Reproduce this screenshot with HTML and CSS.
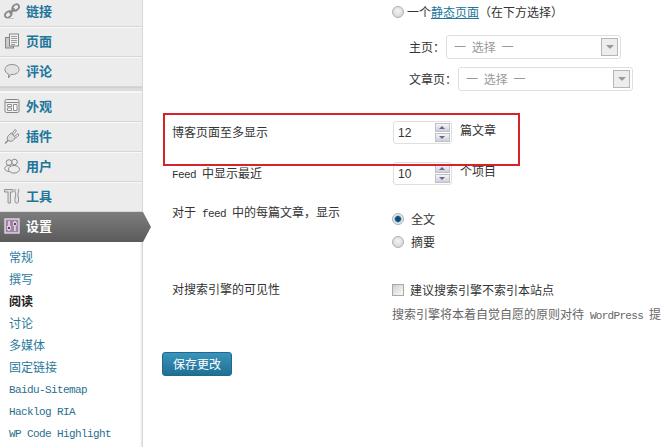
FILE: index.html
```html
<!DOCTYPE html>
<html lang="zh-CN">
<head>
<meta charset="utf-8">
<title>阅读设置</title>
<link rel="stylesheet" href="styles.css">
</head>
<body>
<div class="app">
  <aside class="sidebar">
    <nav class="menu">
      <a class="item first"><svg class="ico" viewBox="0 0 16 16"><g fill="none" stroke="#8a8a8a" stroke-width="1.800"><ellipse cx="4.300" cy="11.500" rx="3.600" ry="2.700" transform="rotate(-42 4.300 11.500)"/><ellipse cx="11.700" cy="4.500" rx="3.600" ry="2.700" transform="rotate(-42 11.700 4.500)"/><path d="M5.500 10.500l5-5" stroke-width="2.600"/></g><path d="M2 15.500h8" stroke="#c8c8c8"/></svg><span>链接</span></a>
      <a class="item"><svg class="ico" viewBox="0 0 16 16"><rect x="1.500" y="4.500" width="8" height="10.500" fill="#c9c9c9" stroke="#858585"/><rect x="5.500" y="1" width="9" height="12" fill="#f2f2f2" stroke="#858585"/><path d="M7 3.500h6M7 5.500h6M7 7.500h6M7 9.500h6M7 11.500h4" stroke="#9c9c9c"/></svg><span>页面</span></a>
      <a class="item"><svg class="ico" viewBox="0 0 16 16"><path d="M8 1.500c4 0 7 2 7 5s-3 5-7 5H6.800L4.500 15l.2-3.900C2.300 10.300 1 8.600 1 6.500c0-3 3-5 7-5z" fill="#e2e2e2" stroke="#8f8f8f"/></svg><span>评论</span></a>
      <div class="sep"></div>
      <a class="item"><svg class="ico" viewBox="0 0 16 16"><rect x="1" y="1.500" width="14" height="13" rx="1.500" fill="#f0f0f0" stroke="#858585"/><path d="M1.500 4.500h13" stroke="#858585"/><path d="M3.500 6.500h4v2h-4zM3.500 10h4v2.500h-4zM9.500 6.500h3.500v6H9.500z" fill="#fff" stroke="#858585" stroke-width=".9"/></svg><span>外观</span></a>
      <a class="item"><svg class="ico" viewBox="0 0 16 16"><path d="M1 15.500l3.500-3.500" stroke="#8d8d8d" stroke-width="1.400" fill="none"/><path d="M4 12.500C2.500 10.500 3.500 8 5.500 6.500l2-1.500 4 4.500-1.500 2c-1.500 2-4 2.500-6 .5z" fill="#dedede" stroke="#858585"/><path d="M8 5.500L11 1.500l1.500 1.200L9.500 6.500zM10.500 8.500l3.500-3 1 1.500-3.200 3z" fill="#f0f0f0" stroke="#858585" stroke-width=".9"/></svg><span>插件</span></a>
      <a class="item"><svg class="ico" viewBox="0 0 16 16"><g fill="#ededed" stroke="#8a8a8a"><circle cx="5" cy="4.500" r="2.800"/><circle cx="10.500" cy="4" r="2.800"/><path d="M.8 10.500c0-2 2-3 4.200-3 1 0 2 .3 2.500 1L6 13.500c-3 0-5.200-1-5.200-3z"/><ellipse cx="10" cy="11.300" rx="5.500" ry="3.800"/></g></svg><span>用户</span></a>
      <a class="item"><svg class="ico" viewBox="0 0 16 16"><path d="M.5 1.500h8.500v2.500H6.500v11h-2.500V4H.5z" fill="#dcdcdc" stroke="#8d8d8d" stroke-width=".9"/><path d="M11 1v3l.6 1v4H11v5c0 1.500 3.500 1.500 3.500 0V9H14V5l.6-1V1" fill="#e6e6e6" stroke="#8d8d8d" stroke-width=".9"/></svg><span>工具</span></a>
      <a class="item current"><svg class="ico" viewBox="0 0 16 16"><rect x="1" y="1" width="14" height="14" fill="#a283a8" stroke="#e9dfea" stroke-width="1.300"/><path d="M5 3v10M11 3v10" stroke="#f4eef5" stroke-width="1.300"/><rect x="3.500" y="8.500" width="3" height="3" fill="#5f4a66" stroke="#f4eef5" stroke-width=".7"/><rect x="9.500" y="4.500" width="3" height="3" fill="#5f4a66" stroke="#f4eef5" stroke-width=".7"/></svg><span>设置</span></a>
    </nav>
    <ul class="submenu">
      <li><a>常规</a></li>
      <li><a>撰写</a></li>
      <li class="active"><a>阅读</a></li>
      <li><a>讨论</a></li>
      <li><a>多媒体</a></li>
      <li><a>固定链接</a></li>
      <li class="latin"><a>Baidu-Sitemap</a></li>
      <li class="latin"><a>Hacklog RIA</a></li>
      <li class="latin"><a>WP Code Highlight</a></li>
    </ul>
  </aside>

  <main class="content">
    <section class="row row-front">
      <div></div>
      <div class="field">
        <label class="choice tight"><span class="radio"></span>一个<a class="link">静态页面</a>（在下方选择）</label>
        <div class="pick pick-home"><span class="pick-label">主页：</span><span class="select"><span>一 选择 一</span><i class="arrow"></i></span></div>
        <div class="pick pick-posts"><span class="pick-label">文章页：</span><span class="select"><span>一 选择 一</span><i class="arrow"></i></span></div>
      </div>
    </section>
    <section class="row row-num">
      <div class="label">博客页面至多显示</div>
      <div class="numline"><span class="spin"><span class="val">12</span><span class="btns"><i class="up"></i><i class="down"></i></span></span><span class="unit">篇文章</span></div>
    </section>
    <section class="row row-num">
      <div class="label"><span class="mono">Feed </span>中显示最近</div>
      <div class="numline"><span class="spin"><span class="val">10</span><span class="btns"><i class="up"></i><i class="down"></i></span></span><span class="unit">个项目</span></div>
    </section>
    <section class="row row-feed">
      <div class="label">对于<span class="mono"> feed </span>中的每篇文章，显示</div>
      <div class="field radios">
        <label class="choice"><span class="radio on"></span>全文</label>
        <label class="choice"><span class="radio"></span>摘要</label>
      </div>
    </section>
    <section class="row row-search">
      <div class="label">对搜索引擎的可见性</div>
      <div class="field">
        <label class="choice"><span class="check"></span>建议搜索引擎不索引本站点</label>
        <p class="desc">搜索引擎将本着自觉自愿的原则对待<span class="mono mono-tight"> WordPress </span>提</p>
      </div>
    </section>
    <button class="save">保存更改</button>
    <div class="redbox"></div>
  </main>
</div>
</body>
</html>
```
FILE: styles.css
```css
* { box-sizing: border-box; }
html, body { margin: 0; height: 100%; background: #fff; overflow: hidden; }
body { font: 12px/16px "Noto Sans CJK SC", "Liberation Sans", sans-serif; color: #333; }
.app { display: flex; width: 661px; height: 447px; overflow: hidden; }

/* sidebar */
.sidebar { width: 143px; flex: none; height: 447px; border-right: 1px solid #d8d8d8; box-shadow: inset -2px 0 2px -1px #e4e4e4; }
.menu { display: flex; flex-direction: column; background: #ececec; }
.item { display: flex; align-items: center; gap: 6px; height: 30px; padding: 0 0 2px 4px; font-size: 13px; font-weight: 700; color: #21759b; border-top: 1px solid #f8f8f8; border-bottom: 1px solid #d6d6d6; }
.item.first { height: 27px; padding-bottom: 5px; border-top: 0; }
.item .ico { width: 16px; height: 16px; flex: none; }
.sep { height: 5px; background: #dcdcdc; border-top: 1px solid #d0d0d0; border-bottom: 1px solid #f6f6f6; }
.item.current { position: relative; width: 151px; height: 30px; color: #fff; border: 0; background: linear-gradient(#7d7d7d, #5b5b5b); clip-path: polygon(0 0, 143px 0, 151px 15px, 143px 30px, 0 30px); }
.submenu { list-style: none; margin: 0; padding: 4px 0 0 9px; color: #21759b; }
.submenu li { height: 22px; line-height: 22px; color: #2a7a9c; white-space: nowrap; }
.submenu .active { font-weight: 700; color: #222; }
.submenu .latin { font: 11px/25px "Liberation Mono", monospace; letter-spacing: -.6px; color: #2a6f8f; }

/* main */
.content { position: relative; flex: 1; min-width: 0; padding-left: 29px; overflow: hidden; }
.row { display: grid; grid-template-columns: 220px 1fr; }
.row-front { height: 121px; padding-top: 4px; }
.row-num { height: 41px; }
.row-feed { height: 76px; padding-top: 1px; }
.row-search { height: 73px; padding-top: 3px; }
.label { padding-top: 3px; color: #333; white-space: nowrap; }
.row-feed .label { padding-top: 0; }
.row-search .label { padding-top: 0; margin-top: -1px; }
.mono { font-family: "Liberation Mono", monospace; font-size: 11px; letter-spacing: -.6px; white-space: pre; }
.mono-tight { letter-spacing: -.7px; }
.field { min-width: 0; white-space: nowrap; }
.choice { display: flex; align-items: center; height: 16px; color: #333; }
.link { color: #21759b; text-decoration: underline; }
.radio { width: 12px; height: 12px; flex: none; margin-right: 7px; border-radius: 50%; border: 1px solid #b0b0b0; background: radial-gradient(circle at 50% 40%, #f4f4f4, #cfcfcf); }
.tight .radio { margin-right: 3px; }
.radio.on { background: radial-gradient(circle, #0d4f78 0 2.500px, #5b9cc4 3px, #e8e8e8 4px); }
.radios { padding-top: 7px; display: flex; flex-direction: column; gap: 7px; }
.check { width: 12px; height: 12px; flex: none; margin-right: 6px; border: 1px solid #a8a8a8; background: linear-gradient(135deg, #cfcfcf, #fbfbfb); }

.pick { display: flex; align-items: center; padding-left: 17px; color: #333; }
.pick-home { margin-top: 15px; }
.pick-posts { margin-top: 8px; }
.pick-label { flex: none; }
.select { display: flex; align-items: center; justify-content: space-between; height: 24px; width: 175px; margin-left: 1px; padding: 0 2px 0 7px; border: 1px solid #dfdfdf; border-radius: 3px; color: #999; word-spacing: 3px; }
.arrow { position: relative; width: 17px; height: 18px; border: 1px solid #b5b5b5; background: #ededed; }
.arrow::after { content: ""; position: absolute; left: 4px; top: 6px; border: 4px solid transparent; border-top: 4px solid #999; border-bottom: 0; }

.numline { display: flex; align-items: center; height: 23px; }
.spin { display: flex; justify-content: space-between; align-items: center; width: 59px; height: 23px; padding: 0 1px 0 4px; border: 1px solid #dfdfdf; border-radius: 3px; font: 12px "Liberation Sans", sans-serif; color: #333; margin-left: 1px; }
.btns { display: flex; flex-direction: column; width: 15px; gap: 1px; }
.btns i { position: relative; height: 9px; background: linear-gradient(#f6f6f6, #cfcfd8); border: 1px solid #c0c0c8; }
.btns i::after { content: ""; position: absolute; left: 3px; top: 2px; border: 3px solid transparent; }
.btns .up::after { border-bottom: 3px solid #606a90; border-top: 0; }
.btns .down::after { border-top: 3px solid #606a90; border-bottom: 0; }
.unit { margin-left: 8px; margin-top: -6px; color: #333; }

.desc { margin: 8px 0 0; color: #666; white-space: nowrap; }

.save { display: block; width: 70px; height: 24px; margin-left: -10px; padding: 0; border: 1px solid #1d6a8c; border-radius: 3px; background: linear-gradient(#3a94bb, #1f6f95); color: #fff; font: inherit; }

.redbox { position: absolute; left: 20px; top: 113px; width: 357px; height: 53px; border: 2px solid #d8222a; pointer-events: none; }
```
